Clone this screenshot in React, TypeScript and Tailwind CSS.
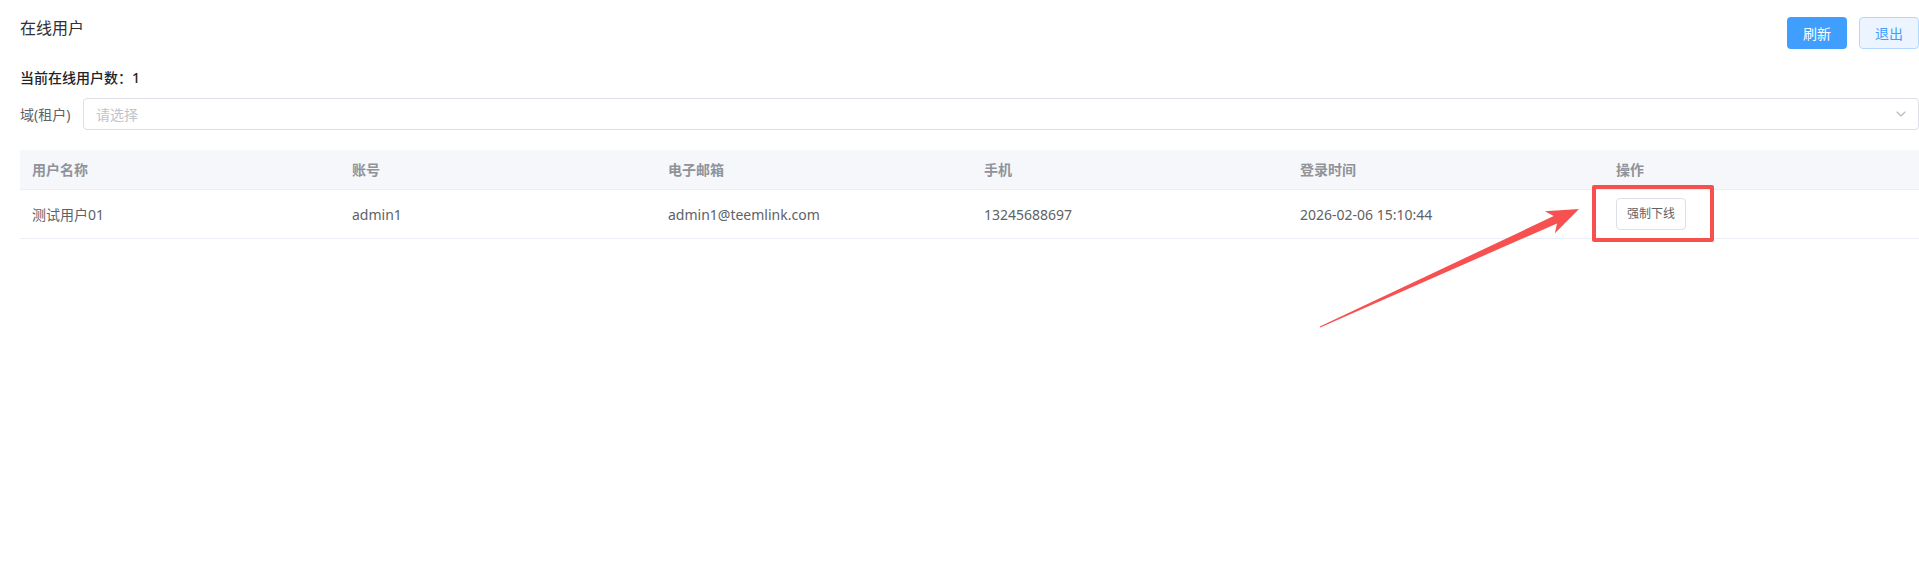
import { ChevronDown } from "lucide-react";

interface OnlineUser {
  name: string;
  account: string;
  email: string;
  phone: string;
  loginTime: string;
}

const users: OnlineUser[] = [
  {
    name: "测试用户01",
    account: "admin1",
    email: "admin1@teemlink.com",
    phone: "13245688697",
    loginTime: "2026-02-06 15:10:44",
  },
];

const columns = ["用户名称", "账号", "电子邮箱", "手机", "登录时间", "操作"];

const gridCols = "grid grid-cols-[320px_316px_316px_316px_316px_1fr]";

export default function App() {
  return (
    <div
      className="relative min-h-[583px] w-full bg-white pl-[20px] pt-[17px]"
      style={{ fontFamily: '"Noto Sans", "Noto Sans CJK SC", sans-serif' }}
    >
      {/* Title + actions */}
      <div className="flex items-start justify-between">
        <h1 className="text-[16px] leading-[22px] font-normal text-[#303133]">在线用户</h1>
        <div className="flex gap-[12px]">
          <button className="h-[32px] w-[60px] rounded-[4px] bg-[#409eff] text-[14px] text-white">
            刷新
          </button>
          <button className="h-[32px] w-[60px] rounded-[4px] border border-[#b3d8ff] bg-[#ecf5ff] text-[14px] text-[#409eff]">
            退出
          </button>
        </div>
      </div>

      <div className="mt-[19px] text-[14px] leading-[20px] font-medium text-[#1f2329]">
        当前在线用户数：1
      </div>

      {/* Tenant filter */}
      <div className="mt-[10px] flex items-center">
        <label className="w-[63px] text-[14px] text-[#606266]">域(租户)</label>
        <div className="flex h-[32px] flex-1 items-center justify-between rounded-[4px] border border-[#dcdfe6] pl-[12px] pr-[9px]">
          <span className="text-[14px] text-[#c0c4cc]">请选择</span>
          <ChevronDown size={16} strokeWidth={1.6} className="text-[#b4b8bf]" />
        </div>
      </div>

      {/* Online users table */}
      <div className="mt-[20px] text-[14px]">
        <div className={`${gridCols} h-[40px] items-center border-b border-[#ebeef5] bg-[#f5f7fa]`}>
          {columns.map((c) => (
            <div key={c} className="pl-[12px] font-semibold text-[#909399]">
              {c}
            </div>
          ))}
        </div>
        {users.map((u) => (
          <div key={u.account} className={`${gridCols} h-[49px] items-center border-b border-[#ebeef5] text-[#606266]`}>
            <div className="pl-[12px]">{u.name}</div>
            <div className="pl-[12px]">{u.account}</div>
            <div className="pl-[12px]">{u.email}</div>
            <div className="pl-[12px]">{u.phone}</div>
            <div className="pl-[12px]">{u.loginTime}</div>
            <div className="pl-[12px]">
              <button className="h-[32px] rounded-[4px] border border-[#dcdfe6] bg-white px-[10px] text-[12px] text-[#606266]">
                强制下线
              </button>
            </div>
          </div>
        ))}
      </div>

      {/* Annotation: highlight box + arrow */}
      <div className="pointer-events-none absolute left-[1592px] top-[185px] h-[57px] w-[122px] rounded-[2px] border-[4px] border-[#f75050]" />
      <svg className="pointer-events-none absolute left-0 top-0" width="1919" height="583">
        <polygon
          points="1579,209 1554.9,233.2 1557,223.4 1320.2,327.5 1319.8,326.5 1553.7,216.1 1544.9,211.3"
          fill="#f75050"
        />
      </svg>
    </div>
  );
}
